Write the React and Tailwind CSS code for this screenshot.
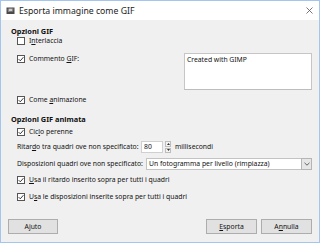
import React from "react";

function Check() {
  return (
    <svg width="6" height="6" viewBox="0 0 6 6" className="block">
      <path d="M0.6 3.1 L2.3 4.8 L5.4 1.2" fill="none" stroke="#222" strokeWidth="0.9" />
    </svg>
  );
}

function Box({ checked }) {
  return (
    <span className="w-[8px] h-[8px] border border-[#555] bg-white flex items-center justify-center shrink-0">
      {checked ? <Check /> : null}
    </span>
  );
}

function CheckRow({ checked, children, className = "" }) {
  return (
    <div className={"flex items-center h-[10px] pl-[16px] " + className}>
      <Box checked={checked} />
      <span className="ml-[4px] whitespace-nowrap">{children}</span>
    </div>
  );
}

function U({ children }) {
  return <span className="underline underline-offset-[1px] decoration-[0.5px]">{children}</span>;
}

function Button({ children, className = "" }) {
  return (
    <div className={"h-[15px] bg-[#e1e1e1] border border-[#adadad] flex items-center justify-center " + className}>
      {children}
    </div>
  );
}

export default function App() {
  return (
    <div className="w-[320px] h-[243px] border border-[#a4c6ee] flex flex-col bg-[#f0f0f0] text-[6.8px] leading-[10px] text-[#111] font-['Noto_Sans','Open_Sans',sans-serif] overflow-hidden">
      {/* title bar */}
      <div className="h-[19px] bg-white flex items-center shrink-0">
        <svg width="9" height="9" viewBox="0 0 9 9" className="ml-[5px]">
          <rect x="0.5" y="1.5" width="8" height="6.5" fill="#4a4a4a" />
          <path d="M1.5 3 L4 2 L7.5 2.5 L7 5.5 L2 6 Z" fill="#8a8a8a" />
          <rect x="3" y="3.2" width="3" height="1.6" fill="#dcdcdc" />
        </svg>
        <span className="ml-[4px] text-[8.7px] text-[#222] whitespace-nowrap">Esporta immagine come GIF</span>
        <svg width="7" height="7" viewBox="0 0 7 7" className="ml-auto mr-[6px]">
          <path d="M0.5 0.5 L6.5 6.5 M6.5 0.5 L0.5 6.5" stroke="#555" strokeWidth="0.8" />
        </svg>
      </div>

      {/* body */}
      <div className="flex flex-col flex-1">
        <div className="h-[10px] mt-[6px] pl-[10px] font-bold text-[7.4px] flex items-center">Opzioni GIF</div>
        <CheckRow checked={false}>I<U>n</U>terlaccia</CheckRow>

        <div className="flex mt-[7px] h-[37px]">
          <div className="flex items-center h-[11px] pl-[16px]">
            <Box checked />
            <span className="ml-[4px] whitespace-nowrap">Commento <U>G</U>IF:</span>
          </div>
          <div className="ml-auto mr-[7px] w-[128px] h-[37px] bg-white border border-[#c6c6c6] border-b-[#bdbdbd] px-[2px] pt-[1px] leading-[9px]">
            Created with GIMP
          </div>
        </div>

        <CheckRow checked className="mt-[5px]">Come <U>a</U>nimazione</CheckRow>

        <div className="h-[10px] mt-[9px] pl-[10px] font-bold text-[7.4px] flex items-center">Opzioni GIF animata</div>
        <CheckRow checked className="mt-[3px]">Cic<U>l</U>o perenne</CheckRow>

        <div className="flex items-center h-[12px] mt-[4px] pl-[16px]">
          <span className="whitespace-nowrap w-[124px]">Ritar<U>d</U>o tra quadri ove non specificato:</span>
          <div className="w-[22px] h-[12px] bg-white border border-[#d0d0d0] flex items-center pl-[2px]">80</div>
          <div className="ml-[2px] w-[6px] h-[12px] flex flex-col gap-[1px]">
            <div className="flex-1 bg-[#f4f4f4] border border-[#bdbdbd] flex items-center justify-center">
              <svg width="3" height="2" viewBox="0 0 3 2"><path d="M0 2 L1.5 0 L3 2 Z" fill="#333" /></svg>
            </div>
            <div className="flex-1 bg-[#f4f4f4] border border-[#bdbdbd] flex items-center justify-center">
              <svg width="3" height="2" viewBox="0 0 3 2"><path d="M0 0 L1.5 2 L3 0 Z" fill="#333" /></svg>
            </div>
          </div>
          <span className="ml-[4px] whitespace-nowrap">millisecondi</span>
        </div>

        <div className="flex items-center h-[12px] mt-[5px] pl-[16px]">
          <span className="whitespace-nowrap w-[128px]">Disposizioni quadri ove non specificato:</span>
          <div className="ml-auto mr-[7px] w-[166px] h-[12px] bg-white border border-[#c3c3c3] flex items-center">
            <span className="pl-[2px] whitespace-nowrap flex-1">Un fotogramma per livello (rimpiazza)</span>
            <div className="w-[11px] h-[12px] -my-[1px] -mr-[1px] bg-[#e6e6e6] border border-[#b5b5b5] flex items-center justify-center">
              <svg width="6" height="4" viewBox="0 0 6 4"><path d="M0.5 0.8 L3 3.2 L5.5 0.8" fill="none" stroke="#555" strokeWidth="0.9" /></svg>
            </div>
          </div>
        </div>

        <CheckRow checked className="mt-[5px]"><U>U</U>sa il ritardo inserito sopra per tutti i quadri</CheckRow>
        <CheckRow checked className="mt-[7px]">U<U>s</U>a le disposizioni inserite sopra per tutti i quadri</CheckRow>

        <div className="flex mt-[17px] px-[7px]">
          <Button className="w-[50px]">Ajuto</Button>
          <Button className="w-[51px] ml-auto"><U>E</U>sporta</Button>
          <Button className="w-[51px] ml-[4px]">A<U>n</U>nulla</Button>
        </div>
      </div>
    </div>
  );
}
